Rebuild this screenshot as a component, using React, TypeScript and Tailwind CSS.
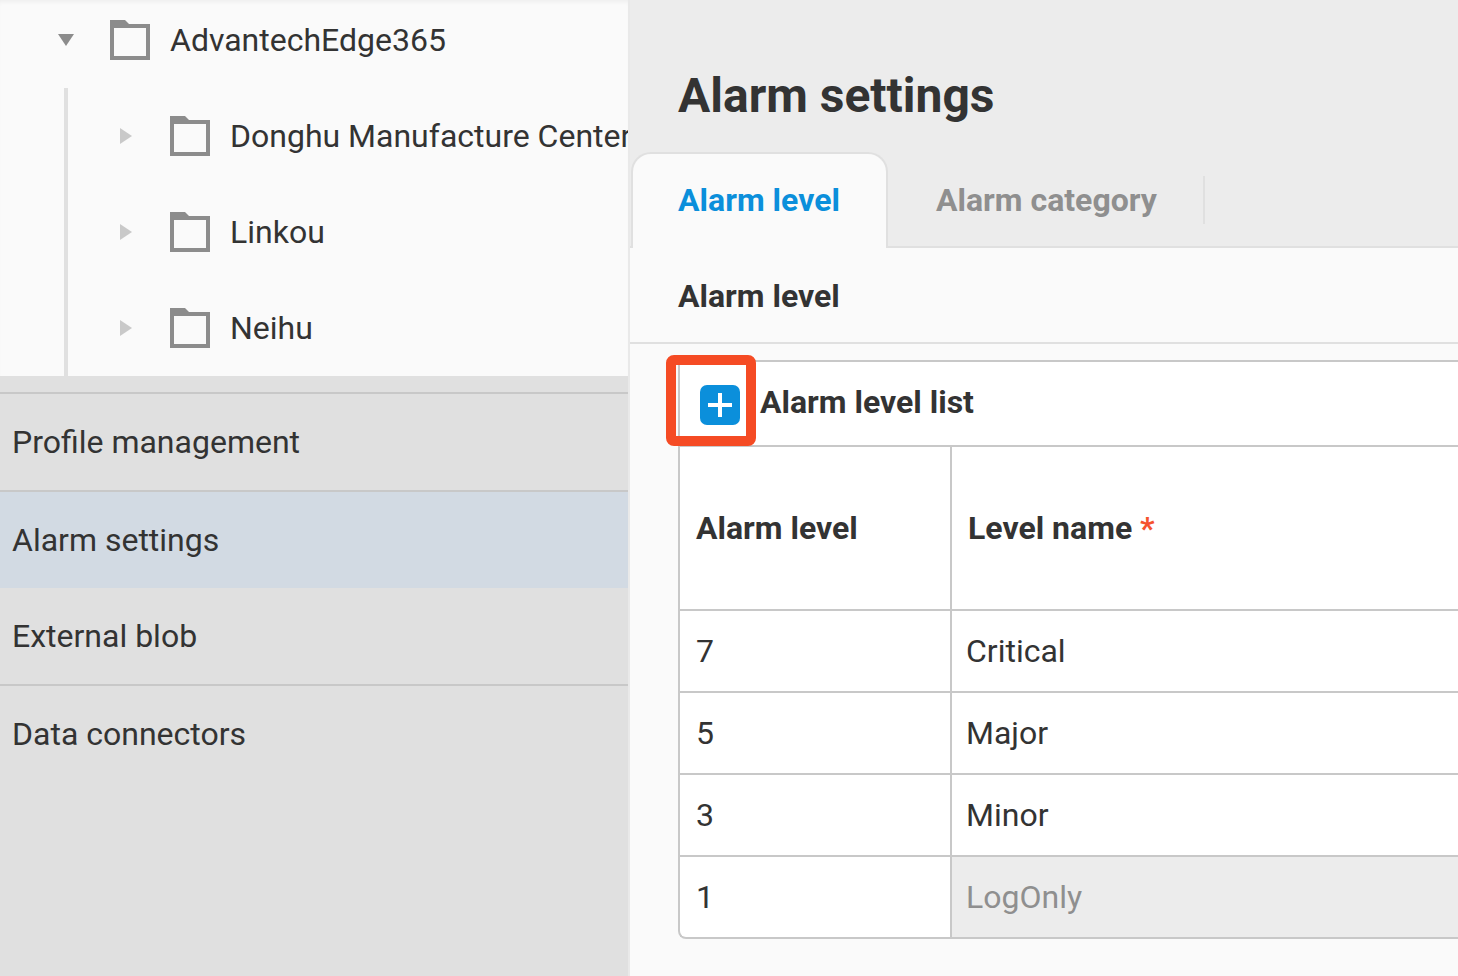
import React from "react";

const Folder = () => (
  <svg width="40" height="40" viewBox="0 0 40 40" className="shrink-0">
    <path d="M0 0H15L19 4H40V40H0Z" fill="#8c8c8c" />
    <rect x="4" y="8" width="32" height="28" fill="#fafafa" />
  </svg>
);

const TreeRow = ({ label }: { label: string }) => (
  <div className="flex h-[96px] items-center">
    <svg width="12" height="16" viewBox="0 0 12 16" className="ml-[52px] shrink-0">
      <path d="M0 0L12 8L0 16Z" fill="#c9c9c9" />
    </svg>
    <div className="ml-[38px]"><Folder /></div>
    <span className="ml-[20px] whitespace-nowrap">{label}</span>
  </div>
);

const NavItem = ({ label, active }: { label: string; active?: boolean }) => (
  <div className={`flex h-[96px] items-center pl-[12px] ${active ? "bg-[#d2dae3]" : ""}`}>{label}</div>
);

const Row = ({ n, name, disabled }: { n: string; name: string; disabled?: boolean }) => (
  <div className="flex h-[82px] border-t-2 border-[#c8c8c8]">
    <div className="flex w-[272px] shrink-0 items-center border-r-2 border-[#c8c8c8] pl-[16px] pr-0">{n}</div>
    <div className={`flex flex-1 items-center pl-[14px] ${disabled ? "bg-[#ececec] text-[#8f8f8f]" : ""}`}>{name}</div>
  </div>
);

export default function App() {
  return (
    <div
      className="flex h-[976px] w-[1458px] overflow-hidden bg-[#ececec] text-[32px] leading-[40px] text-[#333333]"
      style={{ fontFamily: "Roboto, sans-serif" }}
    >
      <aside className="flex h-full w-[630px] shrink-0 flex-col overflow-hidden border-r-2 border-[#e9e9e9] bg-[#e0e0e0]">
        <div className="h-[376px] shrink-0 overflow-hidden bg-[#fafafa] shadow-[inset_0_4px_4px_-2px_rgba(0,0,0,0.05)]">
          <div className="flex h-[80px] items-center">
            <svg width="16" height="12" viewBox="0 0 16 12" className="ml-[58px] shrink-0">
              <path d="M0 0H16L8 12Z" fill="#8c8c8c" />
            </svg>
            <div className="ml-[36px]"><Folder /></div>
            <span className="ml-[20px] whitespace-nowrap">AdvantechEdge365</span>
          </div>
          <div className="ml-[64px] mt-[8px] h-[288px] border-l-4 border-[#e0e0e0]">
            <TreeRow label="Donghu Manufacture Center" />
            <TreeRow label="Linkou" />
            <TreeRow label="Neihu" />
          </div>
        </div>
        <div className="h-[16px] shrink-0" />
        <div className="border-t-2 border-[#c8c8c8]"><NavItem label="Profile management" /></div>
        <div className="border-t-2 border-[#c8c8c8]"><NavItem label="Alarm settings" active /></div>
        <NavItem label="External blob" />
        <div className="border-t-2 border-[#c8c8c8]"><NavItem label="Data connectors" /></div>
      </aside>

      <main className="flex min-w-0 flex-1 flex-col">
        <h1 className="ml-[48px] mt-[66px] h-[86px] text-[48px] font-bold leading-[60px] text-[#333333]">Alarm settings</h1>
        <div className="flex h-[96px] items-stretch border-b-2 border-[#e0e0e0]">
          <div className="relative z-10 -mb-[2px] ml-[1px] flex w-[257px] items-center justify-center rounded-t-[20px] border-2 border-b-0 border-[#e0e0e0] bg-[#fafafa] pb-[2px] pr-[1px] font-bold text-[#0b8fdb]">
            Alarm level
          </div>
          <div className="flex items-center self-stretch pl-[48px] pt-[2px]">
            <span className="font-bold text-[#8f8f8f]">Alarm category</span>
          </div>
          <div className="ml-[46px] mt-[24px] h-[48px] w-[2px] bg-[#e0e0e0]" />
        </div>
        <div className="flex-1 bg-[#fafafa]">
          <div className="flex h-[96px] items-center border-b-2 border-[#e0e0e0] pl-[48px] pt-[2px] font-bold">Alarm level</div>
          <div className="relative ml-[48px] mt-[16px] overflow-visible">
            <div className="flex h-[85px] items-center rounded-tl-[4px] border-l-2 border-t-2 border-[#c8c8c8] bg-white">
              <button className="ml-[20px] mt-[3px] flex h-[40px] w-[40px] items-center justify-center rounded-[7px] bg-[#0b8fdb]">
                <svg width="24" height="24" viewBox="0 0 24 24">
                  <path d="M12 0V24M0 12H24" stroke="#ffffff" strokeWidth="4" fill="none" />
                </svg>
              </button>
              <span className="mb-[3px] ml-[20px] font-bold">Alarm level list</span>
            </div>
            <div className="rounded-bl-[8px] border-b-2 border-l-2 border-[#c8c8c8] bg-white">
              <div className="flex h-[164px] border-t-2 border-[#c8c8c8] font-bold">
                <div className="w-[272px] shrink-0 border-r-2 border-[#c8c8c8] pl-[16px] pt-[61px]">Alarm level</div>
                <div className="flex-1 pl-[16px] pt-[61px]">
                  Level name <span className="text-[#f5532d]">*</span>
                </div>
              </div>
              <Row n="7" name="Critical" />
              <Row n="5" name="Major" />
              <Row n="3" name="Minor" />
              <Row n="1" name="LogOnly" disabled />
            </div>
            <div className="absolute left-[-12px] top-[-5px] h-[91px] w-[90px] rounded-[8px] border-[10px] border-[#f54b24]" />
          </div>
        </div>
      </main>
    </div>
  );
}
